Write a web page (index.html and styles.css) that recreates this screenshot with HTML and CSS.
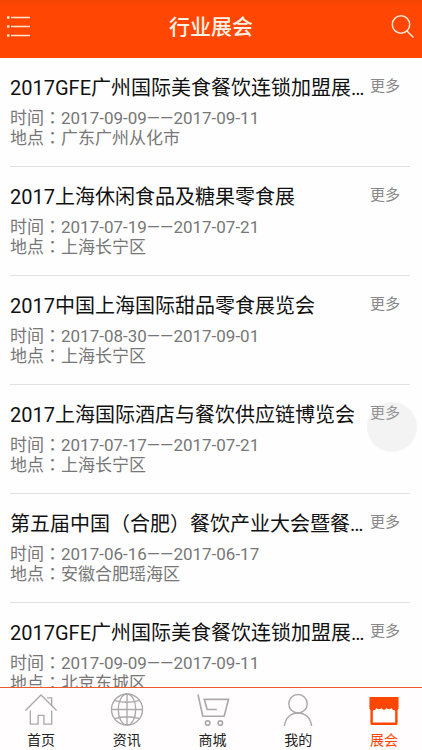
FILE: index.html
```html
<!DOCTYPE html>
<html lang="zh-CN">
<head>
    <meta charset="UTF-8">
    <meta name="viewport" content="width=device-width, initial-scale=1.0">
    <title>行业展会</title>
    <link rel="stylesheet" href="styles.css">
</head>
<body>
    <header class="top-bar">
        <button class="icon-btn" type="button" aria-label="菜单">
            <svg width="24" height="24" viewBox="0 0 24 24" fill="none" stroke="#ffe6d2" stroke-width="1.4">
                <path d="M4 2.500h19M4 11.500h19M4 20.500h19"/>
                <path d="M0 2.500h2.500M0 11.500h2.500M0 20.500h2.500" stroke-width="2.400"/>
            </svg>
        </button>
        <h1>行业展会</h1>
        <button class="icon-btn" type="button" aria-label="搜索">
            <svg width="24" height="24" viewBox="0 0 24 24" fill="none" stroke="#ffe6d2" stroke-width="1.5">
                <circle cx="10" cy="9.500" r="8.700"/>
                <path d="M16 16l6.500 6.500"/>
            </svg>
        </button>
    </header>

    <main class="expo-list">
        <article class="expo">
            <div class="expo-head">
                <h2>2017GFE广州国际美食餐饮连锁加盟展…</h2>
                <a href="#">更多</a>
            </div>
            <p>时间<span class="punct" lang="zh-TW">：</span>2017-09-09——2017-09-11</p>
            <p>地点<span class="punct" lang="zh-TW">：</span>广东广州从化市</p>
        </article>
        <article class="expo">
            <div class="expo-head">
                <h2>2017上海休闲食品及糖果零食展</h2>
                <a href="#">更多</a>
            </div>
            <p>时间<span class="punct" lang="zh-TW">：</span>2017-07-19——2017-07-21</p>
            <p>地点<span class="punct" lang="zh-TW">：</span>上海长宁区</p>
        </article>
        <article class="expo">
            <div class="expo-head">
                <h2>2017中国上海国际甜品零食展览会</h2>
                <a href="#">更多</a>
            </div>
            <p>时间<span class="punct" lang="zh-TW">：</span>2017-08-30——2017-09-01</p>
            <p>地点<span class="punct" lang="zh-TW">：</span>上海长宁区</p>
        </article>
        <article class="expo">
            <div class="expo-head">
                <h2>2017上海国际酒店与餐饮供应链博览会</h2>
                <a href="#">更多</a>
            </div>
            <p>时间<span class="punct" lang="zh-TW">：</span>2017-07-17——2017-07-21</p>
            <p>地点<span class="punct" lang="zh-TW">：</span>上海长宁区</p>
        </article>
        <article class="expo">
            <div class="expo-head">
                <h2>第五届中国<span class="punct" lang="zh-TW">（</span>合肥<span class="punct" lang="zh-TW">）</span>餐饮产业大会暨餐…</h2>
                <a href="#">更多</a>
            </div>
            <p>时间<span class="punct" lang="zh-TW">：</span>2017-06-16——2017-06-17</p>
            <p>地点<span class="punct" lang="zh-TW">：</span>安徽合肥瑶海区</p>
        </article>
        <article class="expo">
            <div class="expo-head">
                <h2>2017GFE广州国际美食餐饮连锁加盟展…</h2>
                <a href="#">更多</a>
            </div>
            <p>时间<span class="punct" lang="zh-TW">：</span>2017-09-09——2017-09-11</p>
            <p>地点<span class="punct" lang="zh-TW">：</span>北京东城区</p>
        </article>
    </main>

    <nav class="tab-bar">
        <a href="#">
            <svg width="34" height="34" viewBox="0 0 34 34" fill="none" stroke="#aaa" stroke-width="1.400">
                <path d="M1 18L17 2l16 16"/>
                <path d="M23 5h5v8"/>
                <path d="M6 18v14h8v-9h6v9h8V18"/>
            </svg>
            首页
        </a>
        <a href="#">
            <svg width="34" height="34" viewBox="0 0 34 34" fill="none" stroke="#aaa" stroke-width="1.400">
                <circle cx="17" cy="17" r="16"/>
                <ellipse cx="17" cy="17" rx="9" ry="16"/>
                <path d="M17 1v32M1 17h32M4 7.500q13 4 26 0M4 26.500q13-4 26 0"/>
            </svg>
            资讯
        </a>
        <a href="#">
            <svg width="34" height="34" viewBox="0 0 34 34" fill="none" stroke="#aaa" stroke-width="1.700">
                <path d="M1.500 1.500l5 22.500H28.500L33 6.500H8l3 10.500h10"/>
                <circle cx="11.500" cy="31" r="2.300"/>
                <circle cx="24.500" cy="31" r="2.300"/>
            </svg>
            商城
        </a>
        <a href="#">
            <svg width="34" height="34" viewBox="0 0 34 34" fill="none" stroke="#aaa" stroke-width="1.500">
                <circle cx="17" cy="11" r="9.500"/>
                <path d="M3 34C4 25 10 20.500 17 20.500S30 25 31 34"/>
            </svg>
            我的
        </a>
        <a href="#" class="active">
            <svg width="34" height="34" viewBox="0 0 34 34">
                <path d="M3 15v16.500q0 1.500 1.500 1.500h25q1.500 0 1.500-1.500V15z" fill="#ff4603"/>
                <path d="M5.500 18.500q3 0 4-2 2 2.500 5 .5 2.500 3.500 5 0 3 2 5-.5 1 2 4 2v12h-23z" fill="#fff"/>
                <path d="M3 4h28q1 0 1 1v11q-1 2-3 2H5q-2 0-3-2V5q0-1 1-1z" fill="#ff4603"/>
                <path d="M5.500 19v-1q3 0 4-2.500 2 2.500 5 0 2.500 4 5 0 3 2.500 5 0 1 2.500 4 2.500v1z" fill="#fff"/>
            </svg>
            展会
        </a>
    </nav>

    <button class="float-btn" type="button" aria-label="快捷菜单"></button>
</body>
</html>
```
FILE: styles.css
```css
* {
    box-sizing: border-box;
}
body {
    display: flex;
    flex-direction: column;
    height: 100vh;
    margin: 0;
    overflow: hidden;
    background: #fefefe;
    font-family: Roboto, "Noto Sans CJK SC", sans-serif;
    color: #111;
}
h1, h2, p {
    margin: 0;
    font-weight: 400;
}
a {
    color: inherit;
    text-decoration: none;
}
button {
    padding: 0;
    border: none;
    background: none;
    cursor: pointer;
}
svg {
    display: block;
}

/* header */
.top-bar {
    display: flex;
    flex-shrink: 0;
    align-items: center;
    justify-content: space-between;
    height: 58px;
    padding: 0 7px 4px;
    background: linear-gradient(#f34403, #ff4603 6px);
    color: #fff0e4;
}
.top-bar h1 {
    font-size: 21px;
    line-height: 28px;
    font-weight: 500;
}

/* list */
.expo-list {
    flex: 1;
    min-height: 0;
    overflow: hidden;
    padding: 0 12px 0 10px;
}
.expo {
    height: 109px;
    padding-top: 16px;
    border-bottom: 1px solid #e2e2e2;
}
.expo-head {
    display: flex;
    justify-content: space-between;
    margin-bottom: 6px;
    padding-right: 10px;
}
.expo-head h2 {
    font-size: 20px;
    line-height: 28px;
    white-space: nowrap;
}
.expo-head a {
    flex-shrink: 0;
    font-size: 15px;
    line-height: 24px;
    color: #888;
}
.expo p {
    font-size: 17px;
    line-height: 20px;
    color: #777;
}
/* centred full-width punctuation */
.expo .punct {
    font-family: "Noto Sans CJK TC", sans-serif;
    line-height: 1;
}

/* bottom tabs */
.tab-bar {
    display: flex;
    flex-shrink: 0;
    justify-content: space-between;
    height: 63px;
    padding: 5px 0 0 3px;
    border-top: 1px solid #ee5a28;
    background: #fffdfd;
}
.tab-bar a {
    display: flex;
    flex-direction: column;
    align-items: center;
    gap: 4px;
    width: 76px;
    font-size: 14px;
    line-height: 20px;
    color: #222;
}
.tab-bar .active {
    color: #ff4603;
}

.float-btn {
    position: absolute;
    right: 5px;
    bottom: 298px;
    width: 50px;
    height: 50px;
    border-radius: 50%;
    background: rgba(200, 200, 200, 0.2);
}
```
